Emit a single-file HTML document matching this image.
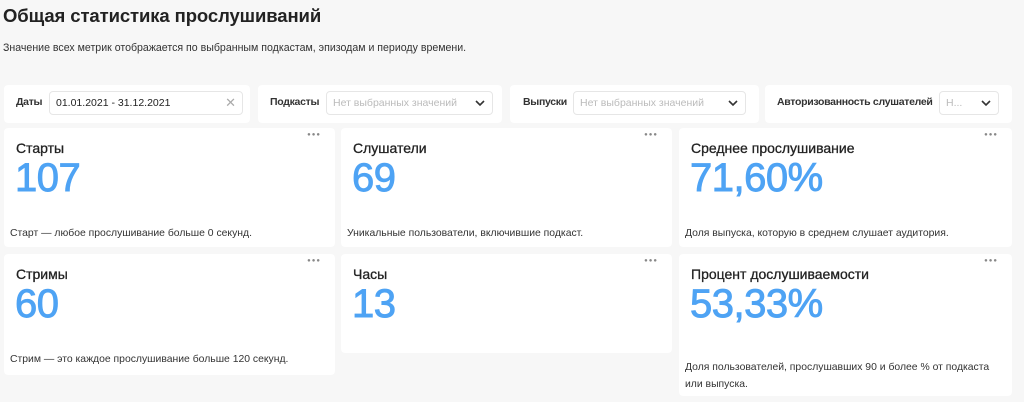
<!DOCTYPE html>
<html><head><meta charset="utf-8"><style>
*{box-sizing:border-box;margin:0;padding:0}
body{width:1024px;height:402px;background:#f7f7f7;font-family:"Liberation Sans","Noto Sans CJK SC",sans-serif;color:#222;position:relative;overflow:hidden}
.abs{position:absolute}
h1{position:absolute;left:3px;top:5px;font-size:18.5px;font-weight:bold;color:#222;letter-spacing:-0.1px}
.sub{left:3px;top:42px;font-size:10.6px;color:#333}
.panel{position:absolute;background:#fff;border-radius:4px;top:85px;height:38px}
.lbl{position:absolute;top:11px;font-size:10.5px;font-weight:bold;color:#333;letter-spacing:-0.3px}
.inp{position:absolute;top:6px;height:24px;border:1px solid #e6e6e6;border-radius:4px;font-size:10.5px;color:#bbb;padding:5px 6px;white-space:nowrap;overflow:hidden}
.chev{position:absolute;right:6px;top:5px}
.card{position:absolute;background:#fff;border-radius:4px}
.t{position:absolute;left:12px;top:12px;font-size:14px;color:#222;-webkit-text-stroke:0.3px #222}
.n{position:absolute;left:11px;top:28px;font-size:40px;color:#4ea3f4;-webkit-text-stroke:0.9px #4ea3f4;letter-spacing:-0.5px}
.d{position:absolute;left:6px;font-size:10.4px;color:#333;line-height:17px}
.dots{position:absolute;right:14px;top:4px;font-size:6px;color:#888;letter-spacing:1px}
</style></head><body>
<h1>Общая статистика прослушиваний</h1>
<div class="abs sub">Значение всех метрик отображается по выбранным подкастам, эпизодам и периоду времени.</div>

<div class="panel" style="left:4px;width:246px">
<div class="lbl" style="left:12px">Даты</div>
<div class="inp" style="left:45px;width:194px;color:#222">01.01.2021 - 31.12.2021<span style="position:absolute;right:6px;top:3px;color:#aaa;font-size:13px">✕</span></div>
</div>
<div class="panel" style="left:258px;width:244px">
<div class="lbl" style="left:12px">Подкасты</div>
<div class="inp" style="left:68px;width:167px">Нет выбранных значений<svg class="chev" width="12" height="12" viewBox="0 0 12 12"><path d="M2 4l4 4 4-4" fill="none" stroke="#333" stroke-width="1.6"/></svg></div>
</div>
<div class="panel" style="left:510px;width:249px">
<div class="lbl" style="left:13px">Выпуски</div>
<div class="inp" style="left:63px;width:173px">Нет выбранных значений<svg class="chev" width="12" height="12" viewBox="0 0 12 12"><path d="M2 4l4 4 4-4" fill="none" stroke="#333" stroke-width="1.6"/></svg></div>
</div>
<div class="panel" style="left:765px;width:247px">
<div class="lbl" style="left:12px">Авторизованность слушателей</div>
<div class="inp" style="left:174px;width:60px">Н...<svg class="chev" width="12" height="12" viewBox="0 0 12 12"><path d="M2 4l4 4 4-4" fill="none" stroke="#333" stroke-width="1.6"/></svg></div>
</div>

<div class="card" style="left:4px;top:128px;width:331px;height:119px"><div class="dots">●●●</div><div class="t">Старты</div><div class="n">107</div><div class="d" style="top:97px">Старт — любое прослушивание больше 0 секунд.</div></div>
<div class="card" style="left:341px;top:128px;width:331px;height:119px"><div class="dots">●●●</div><div class="t">Слушатели</div><div class="n">69</div><div class="d" style="top:97px">Уникальные пользователи, включившие подкаст.</div></div>
<div class="card" style="left:679px;top:128px;width:333px;height:119px"><div class="dots">●●●</div><div class="t">Среднее прослушивание</div><div class="n">71,60%</div><div class="d" style="top:97px">Доля выпуска, которую в среднем слушает аудитория.</div></div>

<div class="card" style="left:4px;top:254px;width:331px;height:121px"><div class="dots">●●●</div><div class="t">Стримы</div><div class="n">60</div><div class="d" style="top:97px">Стрим — это каждое прослушивание больше 120 секунд.</div></div>
<div class="card" style="left:341px;top:254px;width:331px;height:99px"><div class="dots">●●●</div><div class="t">Часы</div><div class="n">13</div></div>
<div class="card" style="left:679px;top:254px;width:333px;height:142px"><div class="dots">●●●</div><div class="t">Процент дослушиваемости</div><div class="n">53,33%</div><div class="d" style="top:105px;width:315px">Доля пользователей, прослушавших 90 и более % от подкаста или выпуска.</div></div>
</body></html>
